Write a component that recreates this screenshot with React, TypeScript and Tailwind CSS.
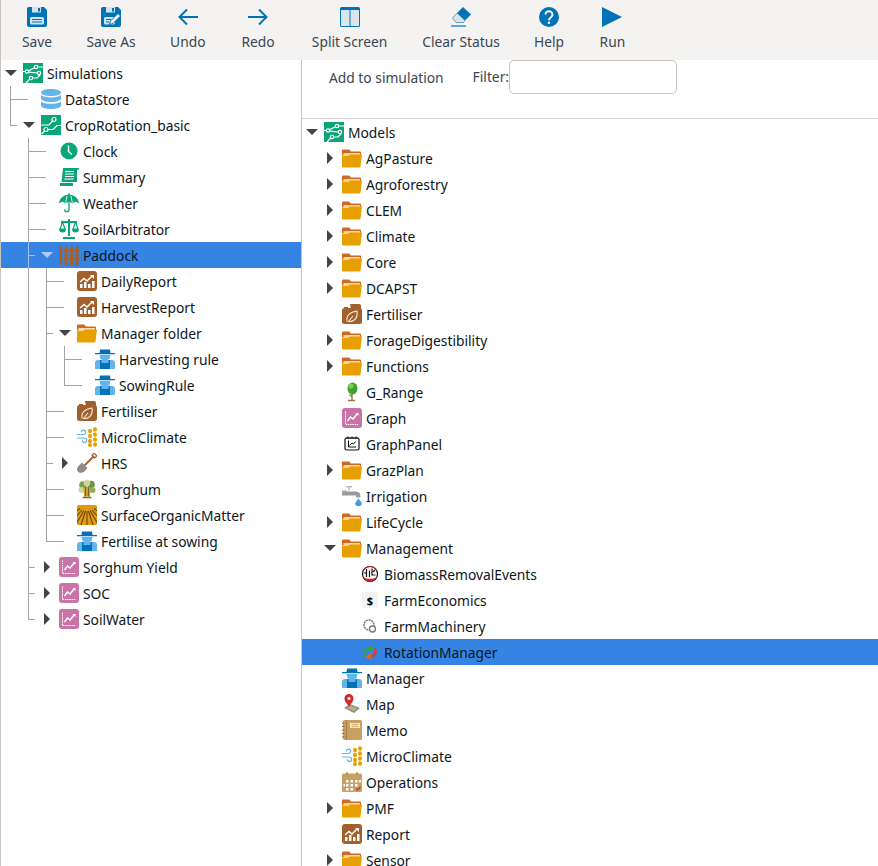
import React from 'react'

const BLUE = '#0272b6'
const GREEN = '#0ba678'
const BROWN = '#a2602c'
const PINK = '#cb73a7'
const SKY = '#62b4ea'
const TAN = '#c9a063'

const FOLDER = (
  <>
    <path d="M0 2.500a1 1 0 0 1 1-1h6l2 2h9a1 1 0 0 1 1 1v3H0Z" fill="#d2691e" />
    <path d="M1.500 5h16.500v3H1.500Z" fill="#f5d9a8" />
    <path d="M0 8h6l2-1.500h12l-1.500 12a1 1 0 0 1-1 1H1a1 1 0 0 1-1-1Z" fill="#e8a000" />
  </>
)

const FARMER = (
  <>
    <path d="M0 4h4.500L5 .5h10l.5 3.500H20v1.300H0Z" fill={BLUE} />
    <path d="M4.500 6h11l-1 4-2 1H7.500l-2-1Z" fill={SKY} />
    <path d="M0 14a3 3 0 0 1 3-3h14a3 3 0 0 1 3 3v6H0Z" fill={SKY} />
    <path d="M5 11h1.500v3h7v-3H15v9H5Z" fill={BLUE} />
  </>
)

const GRAPH = (
  <>
    <rect width="20" height="20" rx="3" fill={PINK} />
    <path d="M3.500 3.500v13h13" stroke="#fff" strokeWidth="1" fill="none" strokeDasharray="1.500 .7" />
    <path d="M5.500 13l3-4 2.500 2 4.500-5.500" stroke="#fff" strokeWidth="1.400" fill="none" />
    <path d="M13.500 5h3v3Z" fill="#fff" />
  </>
)

const REPORT = (
  <>
    <rect width="20" height="20" rx="3" fill={BROWN} />
    <path d="M3 11l4-3.500 3 2.500 5-5" stroke="#fff" strokeWidth="1.400" fill="none" />
    <path d="M13 4h4v4Z" fill="#fff" />
    <path d="M3 13h2.500v4H3ZM7 11h2.500v6H7ZM11 13h2.500v4H11ZM15 10h2.500v7H15Z" fill="#fff" />
  </>
)

const CIRCUIT = (
  <>
    <rect width="20" height="20" fill={GREEN} />
    <g stroke="#fff" strokeWidth="1.200" fill="none">
      <circle cx="13" cy="4" r="1.700" />
      <circle cx="4" cy="8.500" r="1.700" />
      <circle cx="16" cy="10" r="1.700" />
      <circle cx="8" cy="15" r="1.700" />
      <path d="M5.600 7.700l5.800-3M14.700 4H20M0 8.500h2.300M5.700 9.200l8.600.8M9.700 15H14l3-3M6.700 16.200L3 20" />
    </g>
  </>
)

const ICONS: Record<string, React.ReactNode> = {
  simulations: CIRCUIT,
  simulation: (
    <>
      <rect width="20" height="20" fill={GREEN} />
      <g stroke="#fff" strokeWidth="1.200" fill="none">
        <circle cx="13" cy="4.500" r="2" />
        <circle cx="5" cy="14.500" r="2" />
        <path d="M11.500 6L8 10H0M7 14.500h5l4-4h4M3.500 16L.5 19" />
      </g>
    </>
  ),
  datastore: (
    <g fill={SKY}>
      <path d="M0 3.500C0 1.500 4.500 0 10 0s10 1.500 10 3.500S15.500 7 10 7 0 5.500 0 3.500Z" />
      <path d="M0 6c1.500 1.600 5.500 2.400 10 2.400S18.500 7.600 20 6v3.500c0 2-4.500 3.500-10 3.500S0 11.500 0 9.500Z" />
      <path d="M0 12.500c1.500 1.600 5.500 2.300 10 2.300s8.500-.7 10-2.300v4C20 18.500 15.500 20 10 20S0 18.500 0 16.500Z" />
    </g>
  ),
  clock: (
    <>
      <circle cx="10" cy="10" r="8.500" fill={GREEN} />
      <path d="M9.500 4.500v6l3.500 3" stroke="#fff" strokeWidth="1.500" fill="none" />
    </>
  ),
  summary: (
    <>
      <path d="M4 1h14v14H2.500Z" fill={GREEN} />
      <path d="M1 16h13v3H1Z" fill={GREEN} />
      <path d="M6 4.500h9M6 7h9M6 9.500h9M5.500 12h9" stroke="#fff" strokeWidth="1" />
      <path d="M18 1h2v1.500h-2Z" fill={GREEN} />
    </>
  ),
  weather: (
    <>
      <path d="M0 10.500C.5 5 5 1.500 10 1.500S19.500 5 20 10.500l-3.300-2-3.300 2L10 8.500l-3.400 2-3.300-2Z" fill={GREEN} />
      <path d="M6.600 10L8 3M13.400 10L12 3" stroke="#fff" strokeWidth=".8" />
      <path d="M10 0v16.500a2.200 2.200 0 0 1-4.400 0" stroke={GREEN} strokeWidth="1.300" fill="none" />
    </>
  ),
  scale: (
    <>
      <path d="M10 0v17M2 3h16M4 19h12" stroke={GREEN} strokeWidth="2" fill="none" />
      <path d="M3.500 3L1 10h5ZM16.500 3L14 10h5Z" stroke={GREEN} strokeWidth="1.200" fill="none" />
      <path d="M0 10h7a3.500 3.500 0 0 1-7 0ZM13 10h7a3.500 3.500 0 0 1-7 0Z" fill={GREEN} />
    </>
  ),
  fence: (
    <g fill={BROWN}>
      <path d="M0 3l1.500-3L3 3v17H0ZM5.500 3L7 0l1.500 3v17h-3ZM11 3l1.500-3L14 3v17h-3ZM16.500 3L18 0l1.500 3v17h-3Z" />
      <path d="M0 5h20v1.500H0ZM0 13h20v1.500H0Z" />
    </g>
  ),
  report: REPORT,
  folder: FOLDER,
  farmer: FARMER,
  fertiliser: (
    <>
      <path d="M8 0h9a2 2 0 0 1 2 2v3H9Z" fill={BROWN} />
      <path d="M2 3h4v2H2Z" fill={BROWN} />
      <rect y="4" width="20" height="16" rx="2.500" fill={BROWN} />
      <path d="M5 17.500c-1-6 3-9.500 10-10.500 1 6-2 11-8 10.500M6 18l5-6" stroke="#f4e8dc" strokeWidth="1.100" fill="none" />
    </>
  ),
  microclimate: (
    <>
      <path d="M0 7.500h6.500a2.200 2.200 0 1 0-2.200-2.200M0 11h7.500a2.200 2.200 0 1 1-2.200 2.200" stroke={SKY} strokeWidth="1.200" fill="none" />
      <g fill="#e8a000">
        <ellipse cx="13" cy="4" rx="2" ry="2.300" />
        <ellipse cx="18" cy="2.500" rx="2" ry="2.300" />
        <ellipse cx="13" cy="9" rx="2" ry="2.300" />
        <ellipse cx="18" cy="7.500" rx="2" ry="2.300" />
        <ellipse cx="13" cy="14" rx="2" ry="2.300" />
        <ellipse cx="18" cy="12.500" rx="2" ry="2.300" />
        <ellipse cx="13" cy="18" rx="2" ry="1.900" />
        <ellipse cx="18" cy="17.500" rx="2" ry="2.300" />
      </g>
    </>
  ),
  shovel: (
    <>
      <path d="M7 13L17 3" stroke={BROWN} strokeWidth="1.800" />
      <path d="M15 2.500L17 0l3 3-2.500 2Z" stroke={BROWN} strokeWidth="1.200" fill="none" />
      <path d="M5 9.500l5.500 5.500-3 3.500C5 20.500 2 20 .8 18.500S0 14.500 1.500 13Z" fill="#8c8c8c" />
    </>
  ),
  sorghum: (
    <>
      <circle cx="6" cy="6" r="3.800" fill="#7f9f4d" />
      <circle cx="14" cy="5.500" r="3.800" fill="#6f9040" />
      <circle cx="10" cy="4" r="3.300" fill="#c9d8a0" />
      <circle cx="4.500" cy="11" r="3" fill="#c9d8a0" />
      <circle cx="15.500" cy="11" r="3" fill="#8fae5a" />
      <path d="M6.500 8h7l-.5 9.500H7Z" fill="#c9a02c" />
      <path d="M8.500 8v9.500M11.500 8v9.500" stroke="#6f5518" strokeWidth=".8" />
      <path d="M5.500 18.500h9" stroke="#8a6a20" strokeWidth="1.500" />
    </>
  ),
  surface: (
    <>
      <rect width="20" height="20" rx="1.500" fill="#e09a10" />
      <g stroke="#6b4510" strokeWidth="1.100" fill="none">
        <path d="M10 6v14M8.500 6L4 20M11.500 6L16 20M7 5.500L-1 19M13 5.500L21 19M5 5L-2 13M15 5l7 8M3 3.500L-2 7M17 3.500L22 7" />
      </g>
    </>
  ),
  graph: GRAPH,
  grange: (
    <>
      <ellipse cx="10.500" cy="6.500" rx="5" ry="6" fill="#3fa32c" />
      <ellipse cx="9" cy="4" rx="2.500" ry="2.500" fill="#7bd05e" />
      <path d="M10 12v6M10 15l-2.500-2.500M6 18.500h7" stroke="#8f7a4e" strokeWidth="1.400" fill="none" />
    </>
  ),
  graphpanel: (
    <>
      <rect x="3" y="4" width="14" height="12" rx="1.500" stroke="#111" strokeWidth="1.200" fill="none" />
      <path d="M6.500 6.500v6.500h7.500M7.500 11.500l2.500-2.500 1.500 1 2-2.500M4 4h12" stroke="#111" strokeWidth="1" fill="none" />
      <path d="M6 2.500v2M10 2.500v2M14 2.500v2" stroke="#111" strokeWidth="1" />
    </>
  ),
  irrigation: (
    <>
      <path d="M0 5h5M7 1.500v3M4 .8h6M0 6h14a4 4 0 0 1 4 4v1h-3.500v-1a1 1 0 0 0-1-1H0Z" fill="#9a9a9a" stroke="#9a9a9a" strokeWidth="1" />
      <path d="M16.500 12.500c2 2.500 3.300 3.800 3.300 5.200a3.300 2.300 0 0 1-6.600 0c0-1.400 1.300-2.700 3.300-5.200Z" fill="#3c9ee0" />
    </>
  ),
  biomass: (
    <>
      <circle cx="10" cy="10" r="7.500" fill="#fff" stroke="#111" strokeWidth="1.200" />
      <path d="M3 13c1.500 3 3.500 4.800 7 4.800s5.500-1.800 7-4.800c-2 1.300-4.500 1.800-7 1.800S5 14.300 3 13Z" fill="#d0202a" />
      <path d="M2.500 8C4 4.500 6 2.500 10 2.500s6 2 7.500 5.500" stroke="#d0202a" strokeWidth=".8" fill="none" />
      <path d="M6.500 5v8M9.500 6.500V13M12 4.500v6.500h3.500M6.500 9H4M15 6l-2 2" stroke="#111" strokeWidth="1.200" fill="none" />
    </>
  ),
  machinery: (
    <>
      <circle cx="9" cy="9" r="5" stroke="#777" strokeWidth="1.400" fill="none" strokeDasharray="2.200 .6" />
      <circle cx="12.500" cy="13" r="3" stroke="#777" strokeWidth="1.300" fill="#fff" />
    </>
  ),
  rotation: (
    <g transform="translate(3 3) scale(.7)">
      <path d="M2.500 17C.5 11 4 6 9 5.500" stroke="#3aa63a" strokeWidth="3.500" fill="none" />
      <path d="M8.500 0l8 4-7 6.500Z" fill="#3aa63a" />
      <path d="M17 5c3 5.500 0 10.500-6 11.500" stroke="#e03a20" strokeWidth="3.500" fill="none" />
      <path d="M11.500 11L3.500 17l8 3.500Z" fill="#f06020" />
    </g>
  ),
  map: (
    <>
      <path d="M2 14L8 10l10 4-6 5Z" fill="#8a9092" />
      <path d="M5 14l4-2 6 2.500-3 2.500Z" fill="#c6b16c" />
      <path d="M7 0a4.500 4.500 0 0 1 4.500 4.500C11.500 8 8 10 7 13 6 10 2.500 8 2.500 4.500A4.500 4.500 0 0 1 7 0Z" fill="#d52a2a" />
      <circle cx="7" cy="4.500" r="1.500" fill="#fff" />
    </>
  ),
  memo: (
    <>
      <rect x="1" width="19" height="20" rx="1.500" fill={TAN} />
      <path d="M4.500 0v20" stroke="#a87c3f" strokeWidth="1" />
      <path d="M0 3h2.500M0 6.500h2.500M0 10h2.500M0 13.500h2.500M0 17h2.500" stroke="#8f6a35" strokeWidth="1" />
      <rect x="8" y="3" width="10" height="5" fill="#f3e7d0" />
      <path d="M9.500 4.500h7M9.500 6.500h7" stroke={TAN} strokeWidth=".8" />
    </>
  ),
  operations: (
    <>
      <rect y="1.500" width="20" height="18.500" rx="1.500" fill={TAN} />
      <path d="M5 0v3M15 0v3" stroke="#a87c3f" strokeWidth="1.200" />
      <path
        d="M4 8h2.500v2.500H4ZM8.500 8H11v2.500H8.500ZM13 8h2.500v2.500H13ZM17 8h2v2.500h-2ZM4 12h2.500v2.500H4ZM8.500 12H11v2.500H8.500ZM13 12h2.500v2.500H13ZM1.500 12h1.500v2.500H1.500ZM4 16h2.500v2.500H4ZM8.500 16H11v2.500H8.500Z"
        fill="#fff"
      />
      <path d="M14 16.500l1.500 1.500 3-3" stroke="#c0392b" strokeWidth="1.300" fill="none" />
    </>
  ),
}

type TreeNode = {
  label: string
  icon?: string
  glyph?: string
  open?: boolean
  closed?: boolean
  selected?: boolean
  children?: TreeNode[]
}

const leftTree: TreeNode = {
  label: 'Simulations',
  icon: 'simulations',
  open: true,
  children: [
    { label: 'DataStore', icon: 'datastore' },
    {
      label: 'CropRotation_basic',
      icon: 'simulation',
      open: true,
      children: [
        { label: 'Clock', icon: 'clock' },
        { label: 'Summary', icon: 'summary' },
        { label: 'Weather', icon: 'weather' },
        { label: 'SoilArbitrator', icon: 'scale' },
        {
          label: 'Paddock',
          icon: 'fence',
          open: true,
          selected: true,
          children: [
            { label: 'DailyReport', icon: 'report' },
            { label: 'HarvestReport', icon: 'report' },
            {
              label: 'Manager folder',
              icon: 'folder',
              open: true,
              children: [
                { label: 'Harvesting rule', icon: 'farmer' },
                { label: 'SowingRule', icon: 'farmer' },
              ],
            },
            { label: 'Fertiliser', icon: 'fertiliser' },
            { label: 'MicroClimate', icon: 'microclimate' },
            { label: 'HRS', icon: 'shovel', closed: true },
            { label: 'Sorghum', icon: 'sorghum' },
            { label: 'SurfaceOrganicMatter', icon: 'surface' },
            { label: 'Fertilise at sowing', icon: 'farmer' },
          ],
        },
        { label: 'Sorghum Yield', icon: 'graph', closed: true },
        { label: 'SOC', icon: 'graph', closed: true },
        { label: 'SoilWater', icon: 'graph', closed: true },
      ],
    },
  ],
}

const folder = (label: string): TreeNode => ({ label, icon: 'folder', closed: true })

const rightTree: TreeNode = {
  label: 'Models',
  icon: 'simulations',
  open: true,
  children: [
    folder('AgPasture'),
    folder('Agroforestry'),
    folder('CLEM'),
    folder('Climate'),
    folder('Core'),
    folder('DCAPST'),
    { label: 'Fertiliser', icon: 'fertiliser' },
    folder('ForageDigestibility'),
    folder('Functions'),
    { label: 'G_Range', icon: 'grange' },
    { label: 'Graph', icon: 'graph' },
    { label: 'GraphPanel', icon: 'graphpanel' },
    folder('GrazPlan'),
    { label: 'Irrigation', icon: 'irrigation' },
    folder('LifeCycle'),
    {
      label: 'Management',
      icon: 'folder',
      open: true,
      children: [
        { label: 'BiomassRemovalEvents', icon: 'biomass' },
        { label: 'FarmEconomics', glyph: '$' },
        { label: 'FarmMachinery', icon: 'machinery' },
        { label: 'RotationManager', icon: 'rotation', selected: true },
      ],
    },
    { label: 'Manager', icon: 'farmer' },
    { label: 'Map', icon: 'map' },
    { label: 'Memo', icon: 'memo' },
    { label: 'MicroClimate', icon: 'microclimate' },
    { label: 'Operations', icon: 'operations' },
    folder('PMF'),
    { label: 'Report', icon: 'report' },
    folder('Sensor'),
  ],
}

const NodeIcon = ({ node }: { node: TreeNode }) => {
  if (node.glyph) {
    return (
      <span className="w-4 h-4 mx-0.5 shrink-0 bg-[#f3f3f3] flex items-center justify-center text-[11px] font-bold leading-none">
        {node.glyph}
      </span>
    )
  }
  return (
    <svg viewBox="0 0 20 20" className="w-5 h-5 shrink-0">
      {ICONS[node.icon ?? '']}
    </svg>
  )
}

// one row and then its children; `guides` says which ancestor levels still run on
const TreeRow = ({
  node,
  guides,
  last,
  lines,
}: {
  node: TreeNode
  guides: boolean[]
  last: boolean
  lines: boolean
}) => {
  const lineColor = node.selected ? 'border-[#9cc3f1]' : 'border-[#a3a3a3]'
  const hasArrow = node.open || node.closed
  const depth = guides.length

  return (
    <>
      <div className={`flex h-[26px] items-stretch pl-[9px] ${node.selected ? 'bg-[#3584e4]' : ''}`}>
        {guides.slice(0, -1).map((on, i) => (
          <span key={i} className={`w-[18px] shrink-0 ${lines && on ? `border-l ${lineColor}` : ''}`} />
        ))}
        {depth > 0 && (
          <span className="w-[18px] shrink-0 flex flex-col">
            {lines ? (
              <>
                <span className={`h-[14px] border-l border-b ${lineColor} ${hasArrow ? 'w-[7px]' : 'w-[18px]'}`} />
                {!last && <span className={`flex-1 border-l ${lineColor}`} />}
              </>
            ) : null}
          </span>
        )}
        <span className="w-[13px] shrink-0 relative">
          {node.open && (
            <span
              className={`absolute left-[-5px] top-[10px] w-0 h-0 border-x-[6px] border-x-transparent border-t-[6px] ${
                node.selected ? 'border-t-[#a9cbf5]' : 'border-t-[#444444]'
              }`}
            />
          )}
          {node.closed && (
            <span className="absolute left-[-2px] top-[7px] w-0 h-0 border-y-[6px] border-y-transparent border-l-[6px] border-l-[#444444]" />
          )}
        </span>
        <span className="flex items-center gap-1">
          <NodeIcon node={node} />
          <span className="pt-[2px] whitespace-nowrap text-[#0c1622]">{node.label}</span>
        </span>
      </div>
      {node.children?.map((child, i) => (
        <TreeRow
          key={child.label}
          node={child}
          guides={[...guides, i < node.children!.length - 1]}
          last={i === node.children!.length - 1}
          lines={lines}
        />
      ))}
    </>
  )
}

const ToolButton = ({
  label,
  width = '',
  children,
}: {
  label: string
  width?: string
  children: React.ReactNode
}) => (
  <div className={`flex flex-col items-center ${width}`}>
    <div className="h-[30px] pt-[7px] flex justify-center">{children}</div>
    <span className="whitespace-nowrap text-[#3a4652] leading-[24px]">{label}</span>
  </div>
)

const Toolbar = () => (
  <div className="h-[60px] shrink-0 bg-[#f5f3f1] flex gap-[35px] pl-[21px]">
    <ToolButton label="Save">
      <svg viewBox="0 0 20 20" className="w-5 h-5">
        <path d="M2 0h15l3 3v15a2 2 0 0 1-2 2H2a2 2 0 0 1-2-2V2a2 2 0 0 1 2-2Z" fill={BLUE} />
        <path d="M5 0h9v5.500H5Z" fill="#cfe3f2" />
        <path d="M11 1h2v3.500h-2Z" fill={BLUE} />
        <rect x="3" y="10" width="14" height="7.500" rx="1.500" fill="#cfe3f2" />
        <path d="M5 12.500h10M5 15h10" stroke={BLUE} strokeWidth="1" />
      </svg>
    </ToolButton>
    <ToolButton label="Save As" width="w-[48px]">
      <svg viewBox="0 0 20 20" className="w-5 h-5">
        <path d="M2 0h15l3 3v15a2 2 0 0 1-2 2H2a2 2 0 0 1-2-2V2a2 2 0 0 1 2-2Z" fill={BLUE} />
        <path d="M5 0h9v5.500H5Z" fill="#cfe3f2" />
        <path d="M11 1h2v3.500h-2Z" fill={BLUE} />
        <rect x="3" y="10" width="11" height="7.500" rx="1.500" fill="#cfe3f2" />
        <path d="M5 12.500h5M5 15h3" stroke={BLUE} strokeWidth="1" />
        <path d="M8.500 17.500l1-3.500 7.500-7.500 2.500 2.500-7.500 7.500Z" fill="#fff" stroke={BLUE} strokeWidth="1" />
      </svg>
    </ToolButton>
    <ToolButton label="Undo">
      <svg viewBox="0 0 20 20" className="w-5 h-5">
        <path d="M20 10H1.500M9 2.500L1.500 10 9 17.500" stroke={BLUE} strokeWidth="2" fill="none" />
      </svg>
    </ToolButton>
    <ToolButton label="Redo" width="w-[35px]">
      <svg viewBox="0 0 20 20" className="w-5 h-5">
        <path d="M0 10h18.500M11 2.500l7.500 7.500-7.500 7.500" stroke={BLUE} strokeWidth="2" fill="none" />
      </svg>
    </ToolButton>
    <ToolButton label="Split Screen" width="w-[78px]">
      <svg viewBox="0 0 20 20" className="w-5 h-5">
        <rect width="20" height="20" rx="1.500" fill={BLUE} />
        <path d="M1 3h8.500v16H1ZM10.500 3H19v16h-8.500Z" fill="#d9e6f0" />
      </svg>
    </ToolButton>
    <ToolButton label="Clear Status" width="w-[75px]">
      <svg viewBox="0 0 20 20" className="w-5 h-5">
        <path d="M12 0l8 7.500-6 6-8-7.500Z" fill={BLUE} />
        <path d="M6 6l8 7.500-1.500 2H5L1.500 11Z" fill="#dde3e8" stroke={BLUE} strokeWidth=".6" />
        <path d="M0 19h15" stroke={BLUE} strokeWidth="1.200" />
      </svg>
    </ToolButton>
    <ToolButton label="Help" width="w-[31px]">
      <svg viewBox="0 0 20 20" className="w-5 h-5">
        <circle cx="10" cy="10" r="10" fill={BLUE} />
        <path d="M6.500 7.500a3.500 3.300 0 1 1 5.500 2.700c-1.300.9-2 1.400-2 3" stroke="#fff" strokeWidth="2" fill="none" />
        <circle cx="10" cy="15.800" r="1.300" fill="#fff" />
      </svg>
    </ToolButton>
    <ToolButton label="Run">
      <svg viewBox="0 0 20 20" className="w-5 h-5">
        <path d="M0 0l20 10L0 20Z" fill={BLUE} />
      </svg>
    </ToolButton>
  </div>
)

export default function App() {
  return (
    <div className="h-screen flex flex-col overflow-hidden bg-white border-l border-[#c8c5c0] font-['Noto_Sans',sans-serif] text-[13.8px]">
      <Toolbar />
      <div className="flex-1 flex min-h-0">
        <div className="w-[301px] shrink-0 border-r border-[#c8c5c0] overflow-hidden">
          <TreeRow node={leftTree} guides={[]} last lines />
        </div>
        <div className="flex-1 min-w-0 overflow-hidden">
          <div className="h-[59px] border-b border-[#d8d3ce] flex items-start pl-[27px]">
            <div className="flex items-center h-[34px]">
              <span className="pt-[2px] whitespace-nowrap text-[#3a4652]">Add to simulation</span>
              <span className="ml-[29px] whitespace-nowrap text-[#3a4652]">Filter:</span>
              <input className="w-[168px] h-[34px] border border-[#c8c5c0] rounded-[5px] bg-white outline-none" />
            </div>
          </div>
          <TreeRow node={rightTree} guides={[]} last lines={false} />
        </div>
      </div>
    </div>
  )
}
